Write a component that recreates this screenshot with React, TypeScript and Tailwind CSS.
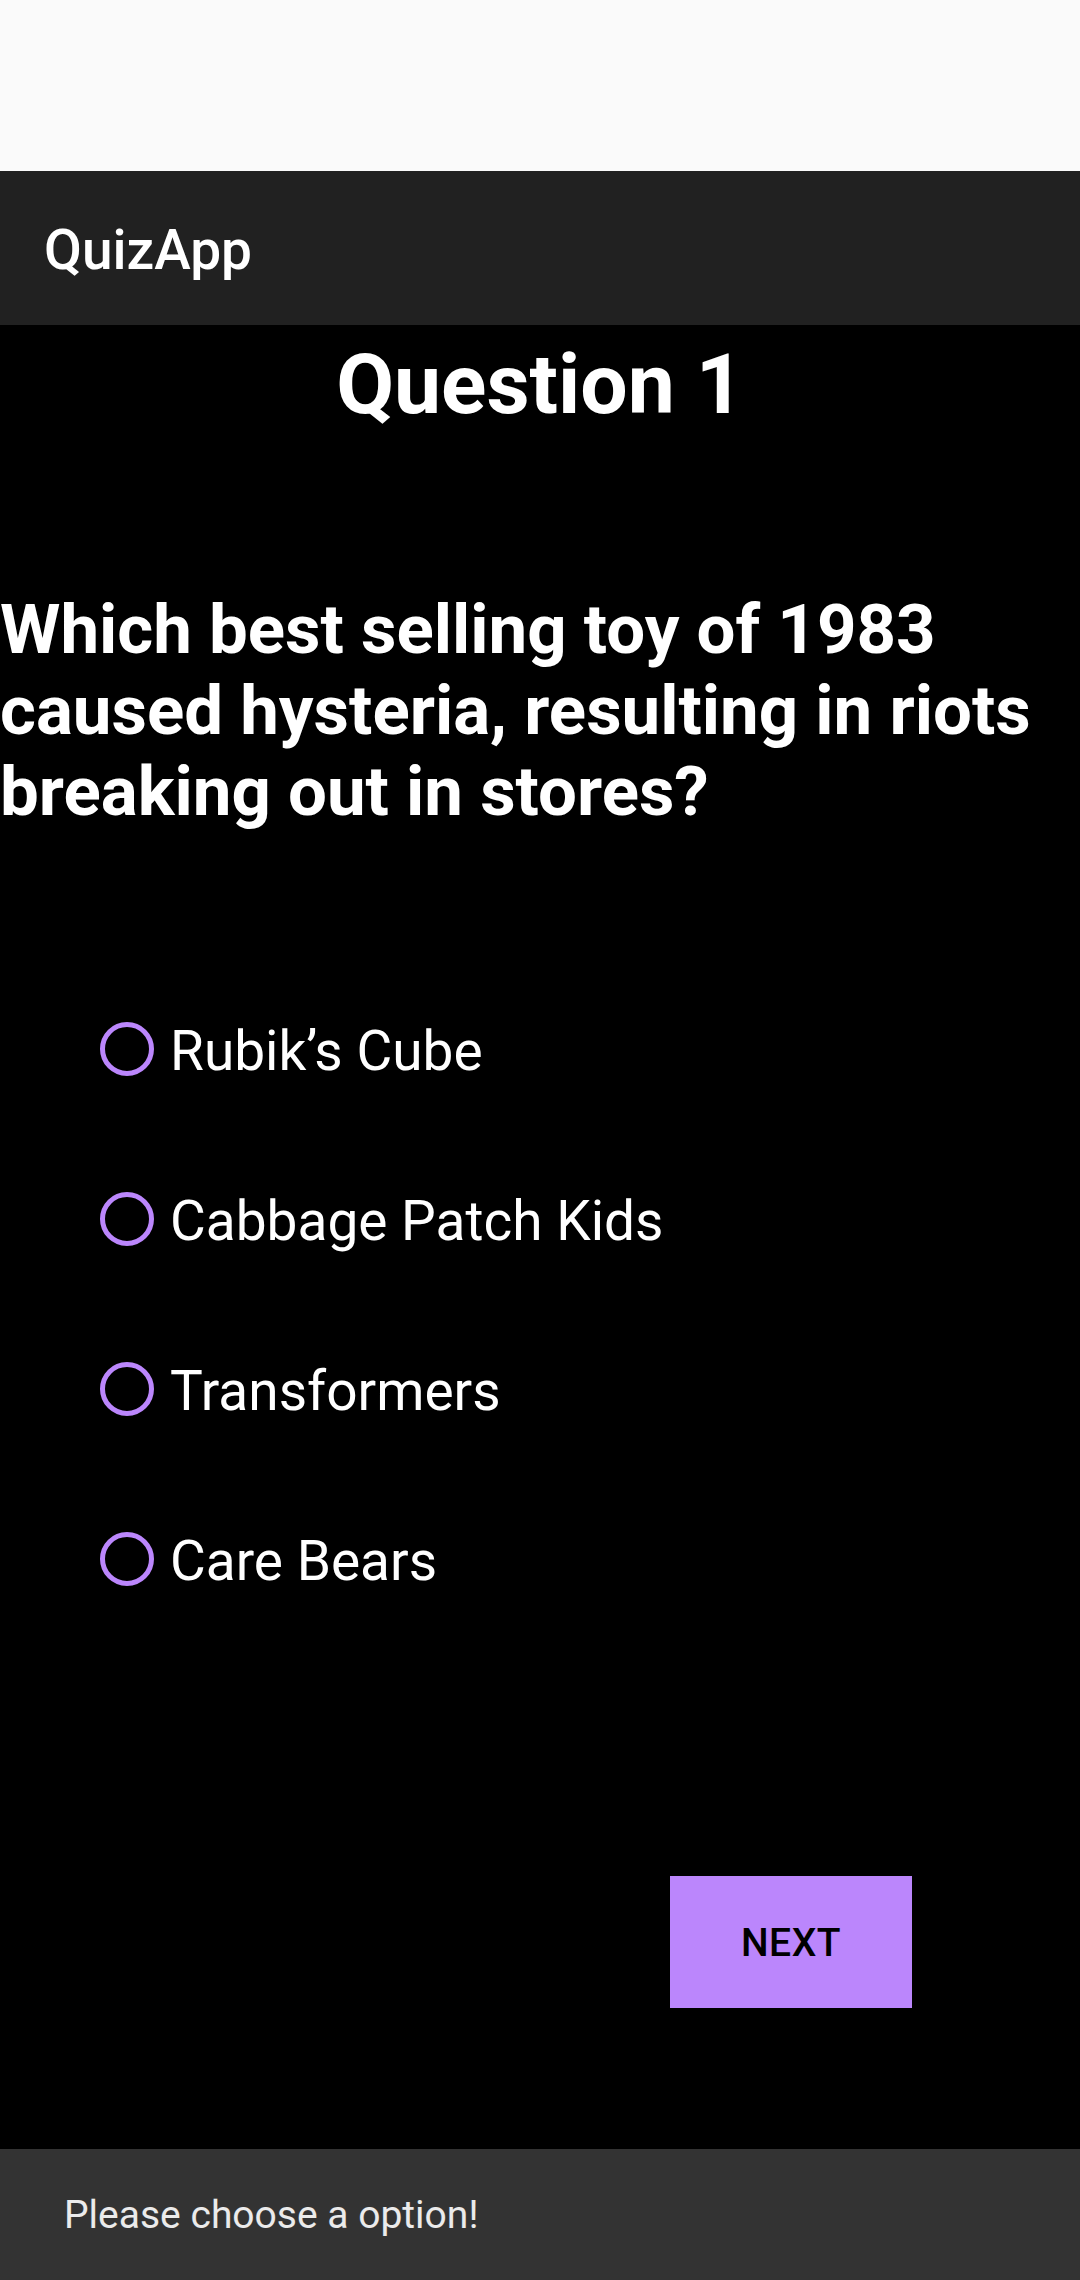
import React from "react"

const OPTIONS = ["Rubik’s Cube", "Cabbage Patch Kids", "Transformers", "Care Bears"]

export default function App() {
  return (
    <div
      className="relative flex flex-col h-[2280px] w-[1080px] overflow-hidden bg-black"
      style={{ fontFamily: "Roboto, 'Liberation Sans', sans-serif" }}
    >
      {/* Status bar */}
      <div className="h-[171px] shrink-0 bg-[#fafafa]" />

      {/* App bar */}
      <div className="h-[154px] shrink-0 flex items-center pl-[44px] bg-[#212121]">
        <span className="text-[55px] font-medium text-white leading-none mt-[4px]">QuizApp</span>
      </div>

      <main className="flex flex-col flex-1">
        <h1 className="mt-[11px] text-center text-[84px] leading-[97px] font-bold text-white">
          Question 1
        </h1>

        <p className="mt-[156px] text-[69px] leading-[81px] font-bold text-white">
          Which best selling toy of 1983 caused hysteria, resulting in riots breaking out in stores?
        </p>

        <div className="mt-[132px] flex flex-col">
          {OPTIONS.map((label) => (
            <label key={label} className="h-[170px] flex items-center pl-[100px] gap-[16px]">
              <span className="w-[54px] h-[54px] rounded-full border-[5px] border-[#bb86fc] shrink-0" />
              <span className="text-[55px] text-white leading-none mt-[5px]">{label}</span>
            </label>
          ))}
        </div>

        <div className="mt-[232px] flex justify-end pr-[168px]">
          <button
            type="button"
            className="w-[242px] h-[132px] bg-[#bb86fc] text-black text-[39px] font-medium tracking-[0.5px] pt-[2px]"
          >
            NEXT
          </button>
        </div>
      </main>

      {/* Snackbar */}
      <div className="absolute left-0 right-0 bottom-0 h-[131px] flex items-center pl-[64px] bg-[#333333]">
        <span className="text-[39px] text-white/90 mt-[2px]">Please choose a option!</span>
      </div>
    </div>
  )
}
